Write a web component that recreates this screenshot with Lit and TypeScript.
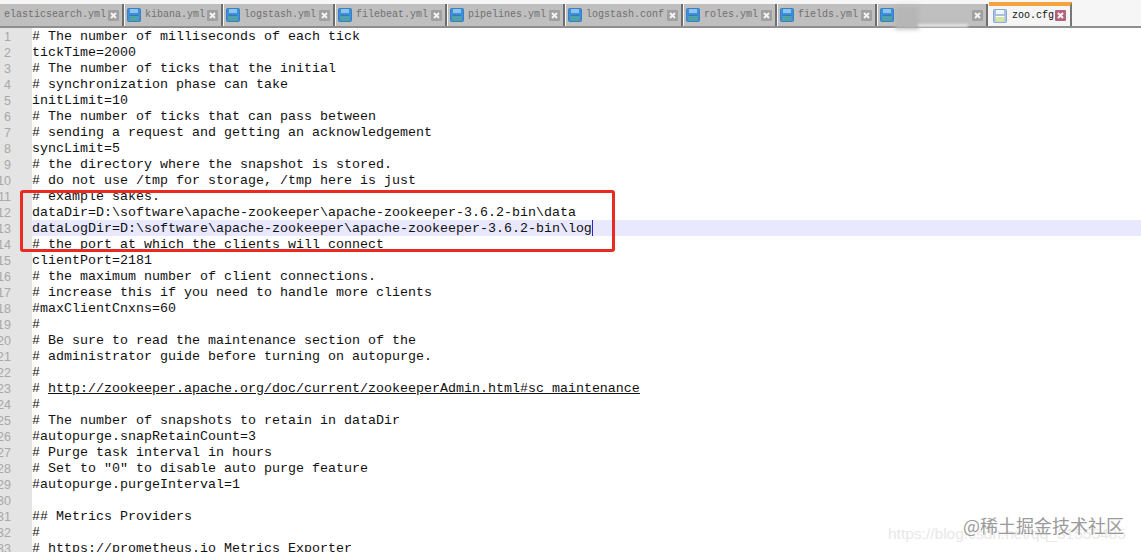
import { LitElement, html, css, svg } from "lit";
import { customElement } from "lit/decorators.js";

const TABS: [string, number, boolean?][] = [
  ["elasticsearch.yml", 124, true],
  ["kibana.yml", 98],
  ["logstash.yml", 111],
  ["filebeat.yml", 111],
  ["pipelines.yml", 117],
  ["logstash.conf", 117],
  ["roles.yml", 93],
  ["fields.yml", 99],
  ["", 110],
];

const LINES: (string | [string, string, string])[] = [
  "# The number of milliseconds of each tick",
  "tickTime=2000",
  "# The number of ticks that the initial",
  "# synchronization phase can take",
  "initLimit=10",
  "# The number of ticks that can pass between",
  "# sending a request and getting an acknowledgement",
  "syncLimit=5",
  "# the directory where the snapshot is stored.",
  "# do not use /tmp for storage, /tmp here is just",
  "# example sakes.",
  "dataDir=D:\\software\\apache-zookeeper\\apache-zookeeper-3.6.2-bin\\data",
  "dataLogDir=D:\\software\\apache-zookeeper\\apache-zookeeper-3.6.2-bin\\log",
  "# the port at which the clients will connect",
  "clientPort=2181",
  "# the maximum number of client connections.",
  "# increase this if you need to handle more clients",
  "#maxClientCnxns=60",
  "#",
  "# Be sure to read the maintenance section of the",
  "# administrator guide before turning on autopurge.",
  "#",
  ["# ", "http://zookeeper.apache.org/doc/current/zookeeperAdmin.html#sc_maintenance", ""],
  "#",
  "# The number of snapshots to retain in dataDir",
  "#autopurge.snapRetainCount=3",
  "# Purge task interval in hours",
  '# Set to "0" to disable auto purge feature',
  "#autopurge.purgeInterval=1",
  "",
  "## Metrics Providers",
  "#",
  ["# ", "https://prometheus.io", " Metrics Exporter"],
];

const saveIcon = (active: boolean) => svg`
  <svg class="icon" width="14" height="14" viewBox="0 0 14 14">
    <rect x="0.5" y="0.5" width="13" height="13" rx="1" fill=${active ? "#a9bfe2" : "#3f8fd8"} stroke=${active ? "#8aa8d8" : "#3a7fc4"}/>
    <rect x="3" y="1" width="8" height="4" fill=${active ? "#f2f6fc" : "#8cc4ee"}/>
    <rect x="2.5" y="8" width="9" height="5" fill=${active ? "#d6e6a8" : "#4fa3a8"}/>
    <rect x="2.5" y="7" width="9" height="1" fill=${active ? "#ffffff" : "#2f78bd"}/>
  </svg>`;

const closeIcon = (active: boolean) => svg`
  <svg class="icon" width="11" height="11" viewBox="0 0 11 11">
    <rect width="11" height="11" rx="1" fill=${active ? "#b4637c" : "#a0a0a0"}/>
    <path d="M3 3 L8 8 M8 3 L3 8" stroke="#f4f4f4" stroke-width="2" fill="none"/>
  </svg>`;

@customElement("app-root")
export class AppRoot extends LitElement {
  static styles = css`
    :host {
      display: block;
      width: 1141px;
      height: 552px;
      overflow: hidden;
      position: relative;
      background: #fff;
    }
    .bar {
      height: 28px;
      box-sizing: border-box;
      background: #f6f6f6;
      border-bottom: 2px solid #8f8f8f;
      padding-top: 4px;
      display: flex;
      align-items: flex-start;
    }
    .tab {
      flex: none;
      box-sizing: border-box;
      height: 22px;
      background: #bfbfbf;
      border-right: 2px solid #6e6e6e;
      margin-right: 1px;
      display: flex;
      align-items: center;
      padding: 0 3px 0 2px;
      font: 10px/1 "Liberation Mono", "Noto Sans CJK SC", monospace;
      color: #707070;
      white-space: nowrap;
    }
    .tab .name {
      flex: 1;
      min-width: 0;
      padding-left: 4px;
    }
    .tab.first {
      padding-left: 4px;
    }
    .tab.first .name {
      padding-left: 0;
    }
    .tab.active {
      width: 83px;
      height: 24px;
      margin: -2px 0 0 0;
      background: #f5f5f5;
      border-top: 4px solid #f5a33c;
      border-right-color: #777;
      color: #111;
      padding: 0 4px 1px 4px;
    }
    .tab.active .name {
      padding-left: 5px;
    }
    .tab.blank {
      position: relative;
    }
    .smudge {
      position: absolute;
      left: 17px;
      width: 24px;
      top: 2px;
      height: 23px;
      background: #b6b6b6;
      filter: blur(2px);
    }
    .gap {
      position: absolute;
      left: 40px;
      width: 50px;
      bottom: -1px;
      height: 3px;
      background: #e4e4e4;
      filter: blur(1px);
    }
    .icon {
      flex: none;
      display: block;
      position: relative;
    }
    .editor {
      font: 13.33px/16px "Liberation Mono", "Courier New", monospace;
      color: #111;
    }
    .row {
      display: flex;
      height: 16px;
    }
    .row.current {
      background: #e8e8ff;
    }
    .num {
      flex: none;
      box-sizing: border-box;
      width: 32px;
      background: #e4e4e4;
      color: #a8a8a8;
      display: flex;
      white-space: nowrap;
      overflow: hidden;
    }
    .num span {
      width: 11px;
      padding-top: 1px;
      flex: none;
      display: flex;
      justify-content: flex-end;
      font-size: 12.5px;
      font-family: "Liberation Sans", sans-serif;
    }
    .text {
      white-space: pre;
      padding-top: 1px;
    }
    .caret {
      display: inline-block;
      width: 1px;
      height: 16px;
      margin-top: -1px;
      background: #3a20c0;
      vertical-align: top;
    }
    .box {
      position: absolute;
      left: 20px;
      top: 190px;
      width: 595px;
      height: 62px;
      box-sizing: border-box;
      border: 3px solid #ea2a20;
      border-radius: 3px;
    }
    .mark {
      position: absolute;
      left: 963px;
      top: 514px;
      font: 18px/22px "Noto Sans CJK SC", sans-serif;
      color: #9a9a9a;
      white-space: nowrap;
    }
    .csdn {
      position: absolute;
      left: 888px;
      top: 525px;
      font: 15.5px/18px "Liberation Sans", sans-serif;
      color: #e8e8e8;
      white-space: nowrap;
    }
  `;

  render() {
    return html`
      <div class="bar">
        ${TABS.map(
          ([name, w, first]) => html`
            <div class="tab ${first ? "first" : ""} ${name ? "" : "blank"}" style="width:${w}px">
              ${name ? "" : html`<div class="smudge"></div><div class="gap"></div>`}
              ${first ? "" : saveIcon(false)}
              <span class="name">${name}</span>
              ${closeIcon(false)}
            </div>
          `
        )}
        <div class="tab active">
          ${saveIcon(true)}
          <span class="name">zoo.cfg</span>
          ${closeIcon(true)}
        </div>
      </div>
      <div class="editor">
        ${LINES.map((l, i) => html`
          <div class="row ${i === 12 ? "current" : ""}">
            <div class="num"><span>${i + 1}</span></div>
            <div class="text">${typeof l === "string"
              ? l
              : html`${l[0]}<u>${l[1]}</u>${l[2]}`}${i === 12 ? html`<span class="caret"></span>` : ""}</div>
          </div>
        `)}
      </div>
      <div class="box"></div>
      <div class="csdn">https://blog.csdn.net/qq_31555485</div>
      <div class="mark">@稀土掘金技术社区</div>
    `;
  }
}
